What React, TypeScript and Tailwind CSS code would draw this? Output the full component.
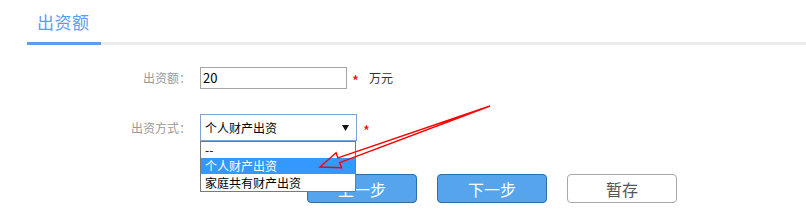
import React from 'react';

const font = { fontFamily: '"Noto Sans CJK SC", "Noto Sans", sans-serif' };

export default function App() {
  return (
    <div className="relative w-[806px] h-[213px] bg-white overflow-hidden" style={font}>
      {/* 标题 + 选项卡条 */}
      <div className="ml-[27px] h-[45px] flex flex-col border-b-[3px] border-[#ececec]">
        <div className="flex-1 flex items-center pl-[10px] pt-[2px] text-[17px] text-[#5b9cf6] tracking-[0.5px]">
          出资额
        </div>
        <div className="w-[74px] h-[3px] -mb-[3px] bg-[#5b9cf6]" />
      </div>

      {/* 出资额 */}
      <div className="flex items-center mt-[22px] h-[22px]">
        <div className="w-[191px] text-right text-[12px] text-[#999]">出资额：</div>
        <div className="ml-[9px] w-[147px] h-[22px] border border-[#a6a6a6] flex items-center pl-[2px] text-[13px] text-black">
          20
        </div>
        <span className="ml-[5px] text-[15px] text-[#ff0000] leading-none pt-[5px]">*</span>
        <span className="ml-[10px] text-[12px] text-[#333]">万元</span>
      </div>

      {/* 出资方式 */}
      <div className="flex items-center mt-[25px] h-[27px]">
        <div className="w-[191px] text-right text-[12px] text-[#999]">出资方式：</div>
        <div className="relative ml-[9px] w-[157px] h-[27px] border border-[#7fa2d4] flex items-center pl-[4px] text-[12px] text-black">
          个人财产出资
          <svg className="absolute right-[7px] top-[10px]" width="7" height="6" viewBox="0 0 7 6">
            <polygon points="0,0 7,0 3.5,6" fill="#111" />
          </svg>
          {/* 下拉列表 */}
          <div className="absolute left-[-1px] top-[26px] w-[156px] bg-white border border-[#7a7a7a] z-10 text-[12px]">
            <div className="h-[16px] leading-[16px] pl-[4px] text-black">--</div>
            <div className="h-[16px] leading-[16px] pl-[4px] bg-[#3399ff] text-white">个人财产出资</div>
            <div className="h-[17px] leading-[17px] pl-[4px] text-black">家庭共有财产出资</div>
          </div>
        </div>
        <span className="ml-[6px] text-[15px] text-[#ff0000] leading-none pt-[5px]">*</span>
      </div>

      {/* 按钮 */}
      <div className="flex gap-[20px] ml-[307px] mt-[33px]">
        <button className="w-[110px] h-[29px] rounded-[4px] bg-[#56a5ec] border border-[#2d6ea6] text-white text-[16px]">
          上一步
        </button>
        <button className="w-[110px] h-[29px] rounded-[4px] bg-[#56a5ec] border border-[#2d6ea6] text-white text-[16px]">
          下一步
        </button>
        <button className="w-[110px] h-[29px] rounded-[4px] bg-white border border-[#a8a8a8] text-[#555] text-[16px]">
          暂存
        </button>
      </div>

      {/* 红色标注箭头 */}
      <svg className="absolute left-0 top-0 pointer-events-none z-20" width="806" height="213" viewBox="0 0 806 213">
        <polygon
          points="490,106 337.9,157.9 336.1,152.7 320,167 341.5,167.7 339.7,162.6"
          fill="none"
          stroke="#ff0000"
          strokeWidth="1.4"
          strokeLinejoin="miter"
        />
      </svg>
    </div>
  );
}
